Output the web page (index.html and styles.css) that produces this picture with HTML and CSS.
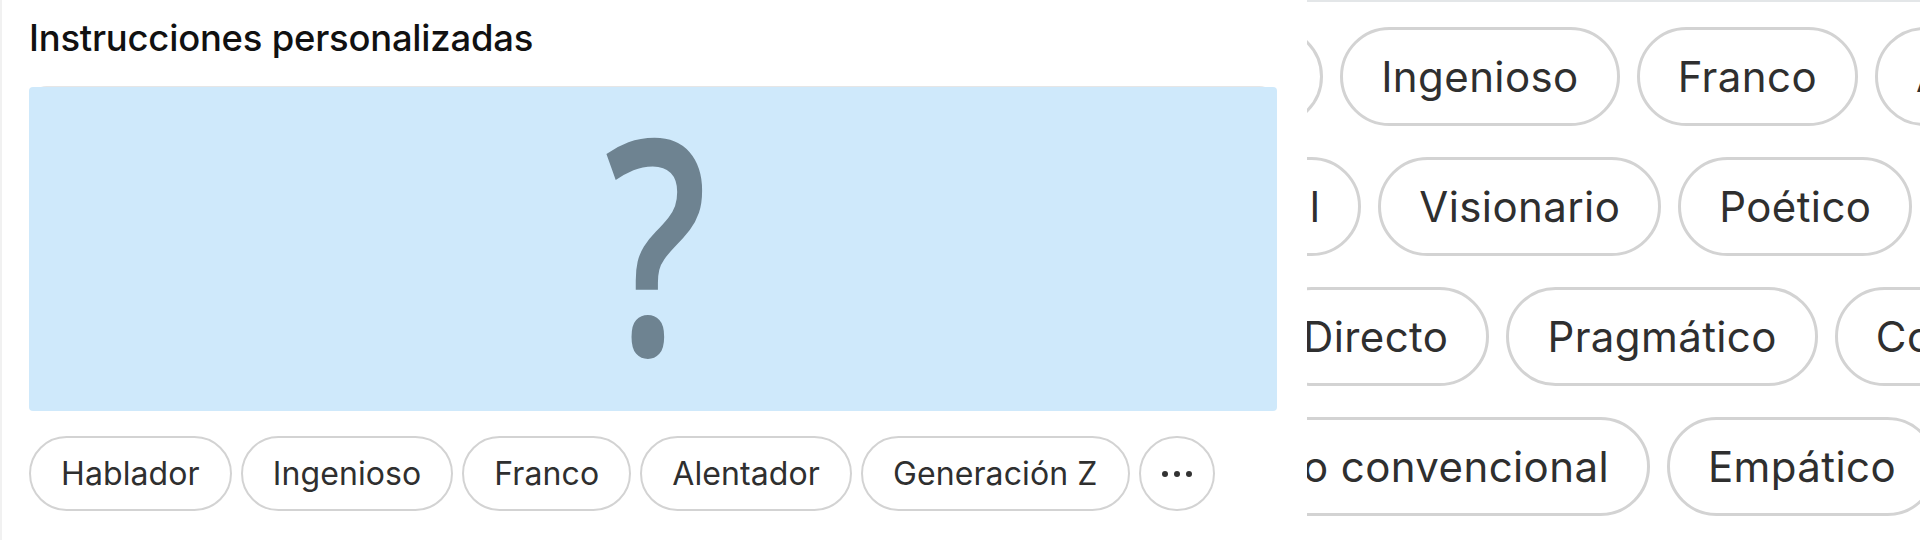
FILE: index.html
```html
<!DOCTYPE html>
<html lang="es">
<head>
<meta charset="utf-8">
<title>Instrucciones personalizadas</title>
<link rel="stylesheet" href="styles.css">
</head>
<body>
<main class="page">
  <section class="left">
    <h1 class="title">Instrucciones personalizadas</h1>
    <div class="card">
      <div class="placeholder"><span class="qmark">?</span></div>
    </div>
    <div class="chips">
      <span class="chip">Hablador</span>
      <span class="chip">Ingenioso</span>
      <span class="chip">Franco</span>
      <span class="chip">Alentador</span>
      <span class="chip">Generación Z</span>
      <span class="chip chip-more"><i class="dot"></i><i class="dot"></i><i class="dot"></i></span>
    </div>
  </section>
  <section class="right">
    <div class="row row-1">
      <span class="chip big">Hablador</span>
      <span class="chip big">Ingenioso</span>
      <span class="chip big">Franco</span>
      <span class="chip big">Alentador</span>
    </div>
    <div class="row row-2">
      <span class="chip big">Tradicional</span>
      <span class="chip big">Visionario</span>
      <span class="chip big">Poético</span>
      <span class="chip big">Relajado</span>
    </div>
    <div class="row row-3">
      <span class="chip big">Directo</span>
      <span class="chip big">Pragmático</span>
      <span class="chip big">Corporativo</span>
    </div>
    <div class="row row-4">
      <span class="chip big">Poco convencional</span>
      <span class="chip big">Empático</span>
      <span class="chip big">Humilde</span>
    </div>
  </section>
</main>
</body>
</html>
```
FILE: styles.css
```css
* { box-sizing: border-box; }
html, body { margin: 0; padding: 0; background: #fff; }
body { width: 1920px; height: 540px; overflow: hidden; font-family: Inter, "Liberation Sans", sans-serif; color: #2e2e2e; }

.page { display: flex; height: 540px; }

.left {
  width: 1307px;
  flex: none;
  padding: 18px 0 0 27px;
  border-left: 2px solid #f1f1f1;
  display: flex;
  flex-direction: column;
}
.title {
  margin: 0;
  font-size: 36.4px;
  line-height: 40px;
  font-weight: 500;
  color: #111;
  letter-spacing: -0.2px;
}
.card {
  margin-top: 28px;
  width: 1248px;
  height: 325px;
  border-radius: 18px;
  border-top: 2px solid #e6e6e6;
  display: flex;
}
.placeholder {
  flex: 1;
  margin-top: -1px;
  border-radius: 4px;
  background: #cfe9fb;
  display: flex;
  align-items: center;
  justify-content: center;
}
.qmark {
  font-family: "Open Sans", "Noto Sans", sans-serif;
  font-weight: 600;
  font-size: 300px;
  line-height: 1;
  color: #6e8391;
  transform: translate(3px, -10px) scaleX(0.76);
}

.chips {
  margin-top: 25px;
  display: flex;
  gap: 9px;
}
.chip {
  flex: none;
  height: 75px;
  padding: 0 30px;
  border: 2px solid #d3d3d3;
  border-radius: 40px;
  display: flex;
  align-items: center;
  font-size: 32px;
  color: #2f2f2f;
  white-space: nowrap;
  letter-spacing: 0.1px;
}
.chip-more {
  width: 76px;
  padding: 0;
  justify-content: center;
  gap: 6px;
}
.dot { width: 6px; height: 6px; border-radius: 50%; background: #333; display: block; }

.right {
  flex: 1;
  overflow: hidden;
  border-top: 2px solid #e3e6e8;
  padding-top: 25px;
  display: flex;
  flex-direction: column;
  gap: 31px;
}
.row { display: flex; gap: 17px; }
.chip.big {
  height: 99px;
  padding: 0 38px;
  border-width: 3px;
  border-radius: 52px;
  font-size: 42px;
  letter-spacing: 0.4px;
}
.row-1 { margin-left: -250px; }
.row-2 { margin-left: -250px; }
.row-3 { margin-left: -45px; }
.row-4 { margin-left: -122px; }
```
